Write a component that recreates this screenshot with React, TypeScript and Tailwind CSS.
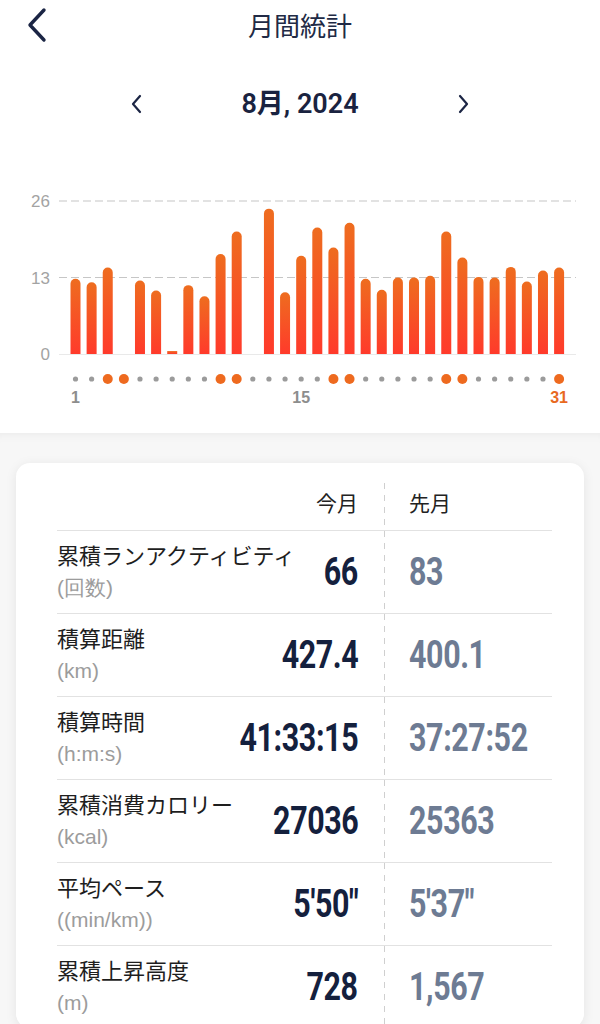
import React from 'react';

const days = [
  12.8, 12.2, 14.7, 0, 12.5, 10.8, 0.5, 11.7, 9.8, 17, 20.8, 0, 24.7, 10.5, 16.7, 21.5,
  18.1, 22.3, 12.8, 10.9, 13, 13, 13.3, 20.8, 16.4, 13.1, 13, 14.8, 12.3, 14.2, 14.7,
];
const weekends = [3, 4, 10, 11, 17, 18, 24, 25, 31];

const rows = [
  { label: '累積ランアクティビティ', unit: '(回数)', cur: '66', prev: '83' },
  { label: '積算距離', unit: '(km)', cur: '427.4', prev: '400.1' },
  { label: '積算時間', unit: '(h:m:s)', cur: '41:33:15', prev: '37:27:52' },
  { label: '累積消費カロリー', unit: '(kcal)', cur: '27036', prev: '25363' },
  { label: '平均ペース', unit: '((min/km))', cur: '5\u203250\u2033', prev: '5\u203237\u2033' },
  { label: '累積上昇高度', unit: '(m)', cur: '728', prev: '1,567' },
];

const jp = { fontFamily: '"Noto Sans CJK JP", "Noto Sans", sans-serif' };
const num = { fontFamily: 'Roboto, "Liberation Sans", sans-serif' };

// chart geometry (svg starts at page y=158)
const BASE = 196;
const UNIT = 5.885;
const cx = (d: number) => 75.5 + (d - 1) * 16.12;

function barPath(x: number, h: number) {
  if (h < 6) return `M${x},${BASE} V${BASE - h} H${x + 10} V${BASE} Z`;
  const top = BASE - h;
  return `M${x},${BASE} V${top + 5} A5 5 0 0 1 ${x + 10},${top + 5} V${BASE} Z`;
}

function Chart() {
  return (
    <svg width="600" height="275" viewBox="0 0 600 275" className="block">
      <defs>
        <linearGradient id="bar" x1="0" y1="0" x2="0" y2="1">
          <stop offset="0" stopColor="#ee6d1f" />
          <stop offset="1" stopColor="#ff3a2b" />
        </linearGradient>
      </defs>
      <g fontFamily='"Liberation Sans", Arial, sans-serif' fontSize="17" fill="#a3a3a3" textAnchor="end">
        <text x="50" y="49">26</text>
        <text x="50" y="126">13</text>
        <text x="50" y="202">0</text>
      </g>
      <line x1="59" x2="576" y1="43" y2="43" stroke="#c6c6c6" strokeWidth="1.2" strokeDasharray="8 4" />
      <line x1="59" x2="576" y1="119.5" y2="119.5" stroke="#c6c6c6" strokeWidth="1.2" strokeDasharray="8 4" />
      <line x1="59" x2="576" y1="196.5" y2="196.5" stroke="#e9e9e9" strokeWidth="1" />
      {days.map((v, i) =>
        v > 0 ? <path key={i} d={barPath(cx(i + 1) - 5, v * UNIT)} fill="url(#bar)" /> : null
      )}
      {days.map((_, i) => {
        const we = weekends.includes(i + 1);
        return (
          <circle key={i} cx={cx(i + 1)} cy="221" r={we ? 5 : 2.6} fill={we ? '#ee6a1f' : '#9b9b9b'} />
        );
      })}
      <g fontFamily='"Liberation Sans", Arial, sans-serif' fontSize="16" fontWeight="700" textAnchor="middle">
        <text x={cx(1)} y="245" fill="#8d8d8d">1</text>
        <text x={cx(15)} y="245" fill="#8d8d8d">15</text>
        <text x={cx(31)} y="245" fill="#e8691f">31</text>
      </g>
    </svg>
  );
}

function Chevron({ dir, className }: { dir: 'left' | 'right'; className?: string }) {
  return (
    <svg width="12" height="20" viewBox="0 0 12 20" className={className}>
      <path
        d={dir === 'left' ? 'M9 2 L2 10 L9 18' : 'M3 2 L10 10 L3 18'}
        fill="none"
        stroke="#1b2544"
        strokeWidth="2.2"
        strokeLinecap="round"
        strokeLinejoin="round"
      />
    </svg>
  );
}

const dash = 'w-px h-full bg-[repeating-linear-gradient(to_bottom,#cfcfcf_0px,#cfcfcf_6px,transparent_6px,transparent_12px)]';

export default function App() {
  return (
    <div className="w-[600px] h-[1024px] overflow-hidden bg-white" style={jp}>
      {/* header */}
      <div className="relative h-[50px] flex items-center justify-center">
        <svg width="24" height="36" viewBox="0 0 24 36" className="absolute left-[25px] top-[7px]">
          <path d="M19 3 L5 18 L19 33" fill="none" stroke="#1b2544" strokeWidth="3.4" strokeLinecap="round" strokeLinejoin="round" />
        </svg>
        <span className="text-[26px] text-[#212a45] leading-none">月間統計</span>
      </div>

      {/* month switcher */}
      <div className="h-[108px] flex items-center justify-center">
        <Chevron dir="left" />
        <div className="w-[314px] text-center text-[27px] font-semibold text-[#1a2340]" style={{ fontFamily: 'Roboto, "Noto Sans CJK JP", sans-serif' }}>
          8月, 2024
        </div>
        <Chevron dir="right" />
      </div>

      <Chart />

      {/* summary */}
      <div className="bg-[#f7f7f7] shadow-[inset_0_10px_10px_-8px_rgba(0,0,0,0.05)] px-4 pt-[30px] h-full">
        <div className="bg-white rounded-[14px] shadow-[0_2px_12px_rgba(0,0,0,0.08)] pl-[41px] pr-[32px]">
          <div className="flex h-[67px] text-[21px] text-[#222]">
            <div className="flex-1 flex items-center justify-end pt-[13px]">今月</div>
            <div className="w-[51px] pl-[26px] pt-[20px]">
              <div className={dash} />
            </div>
            <div className="w-[143px] flex items-center pt-[13px]">先月</div>
          </div>
          {rows.map((r) => (
            <div key={r.label} className="flex h-[83px] border-t border-[#e2e2e2]">
              <div className="flex-1 flex min-w-0">
                <div className="flex flex-col pt-[8px] whitespace-nowrap">
                  <span className="text-[22px] leading-[30px] text-[#1e1e1e]">{r.label}</span>
                  <span className="mt-[6px] text-[21px] leading-[26px] text-[#9c9c9c]" style={{ fontFamily: '"Liberation Sans", Arial, sans-serif' }}>
                    {r.unit}
                  </span>
                </div>
                <div className="flex-1 flex items-center justify-end">
                  <span className="inline-block origin-right scale-x-[0.78] text-[39px] font-bold leading-none tracking-[-0.5px] text-[#14203d]" style={num}>{r.cur}</span>
                </div>
              </div>
              <div className="w-[51px] pl-[26px]">
                <div className={dash} />
              </div>
              <div className="w-[143px] flex items-center">
                <span className="inline-block origin-left scale-x-[0.78] text-[39px] font-bold leading-none tracking-[-0.5px] text-[#6d7b93]" style={num}>{r.prev}</span>
              </div>
            </div>
          ))}
        </div>
      </div>
    </div>
  );
}
